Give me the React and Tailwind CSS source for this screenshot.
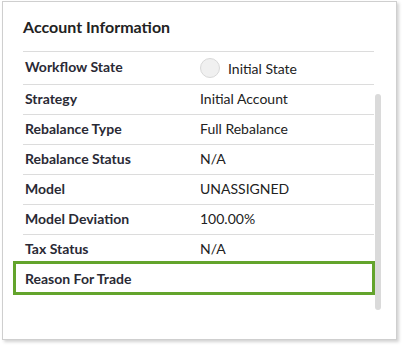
import React from "react";

const rows = [
  ["Strategy", "Initial Account"],
  ["Rebalance Type", "Full Rebalance"],
  ["Rebalance Status", "N/A"],
  ["Model", "UNASSIGNED"],
  ["Model Deviation", "100.00%"],
  ["Tax Status", "N/A"],
];

export default function App() {
  return (
    <div
      className="w-[407px] h-[350px] bg-white pt-[1px] pl-[2px]"
      style={{ fontFamily: "Lato, 'Open Sans', sans-serif" }}
    >
      <div className="w-[395px] h-[339px] border border-[#cfcfcf] bg-white shadow-[2px_2px_3px_rgba(0,0,0,0.18)] pl-[20px]">
        <div className="h-[49px] pt-[14px] text-[16px] font-bold text-[#222] leading-[22px]">
          Account Information
        </div>
        <div className="flex">
          <div className="w-[351px] text-[14px] text-[#222]">
            <div className="h-[33px] border-t border-[#dcdcdc] flex items-center">
              <div className="w-[177px] pl-[2px] font-bold text-[#2a2a35] -mt-[4px]">Workflow State</div>
              <div className="flex items-center gap-[8px]">
                <div className="w-[20px] h-[20px] rounded-full bg-[#f0f0f0] border border-[#d8d8d8]" />
                <span>Initial State</span>
              </div>
            </div>
            {rows.map(([k, v]) => (
              <div key={k} className="h-[30px] pb-[2px] border-t border-[#dcdcdc] flex items-center">
                <div className="w-[177px] pl-[2px] font-bold text-[#2a2a35]">{k}</div>
                <div>{v}</div>
              </div>
            ))}
            <div className="relative h-[30px] pb-[2px] flex items-center">
              <div className="w-[177px] pl-[2px] font-bold text-[#2a2a35]">Reason For Trade</div>
              <div className="absolute -top-[3px] -left-[10px] w-[362px] h-[34px] border-[3px] border-[#63a42c]" />
            </div>
          </div>
          <div className="ml-[1px] mt-[43px] w-[6px] h-[216px] rounded-full bg-[#dadada]" />
        </div>
      </div>
    </div>
  );
}
